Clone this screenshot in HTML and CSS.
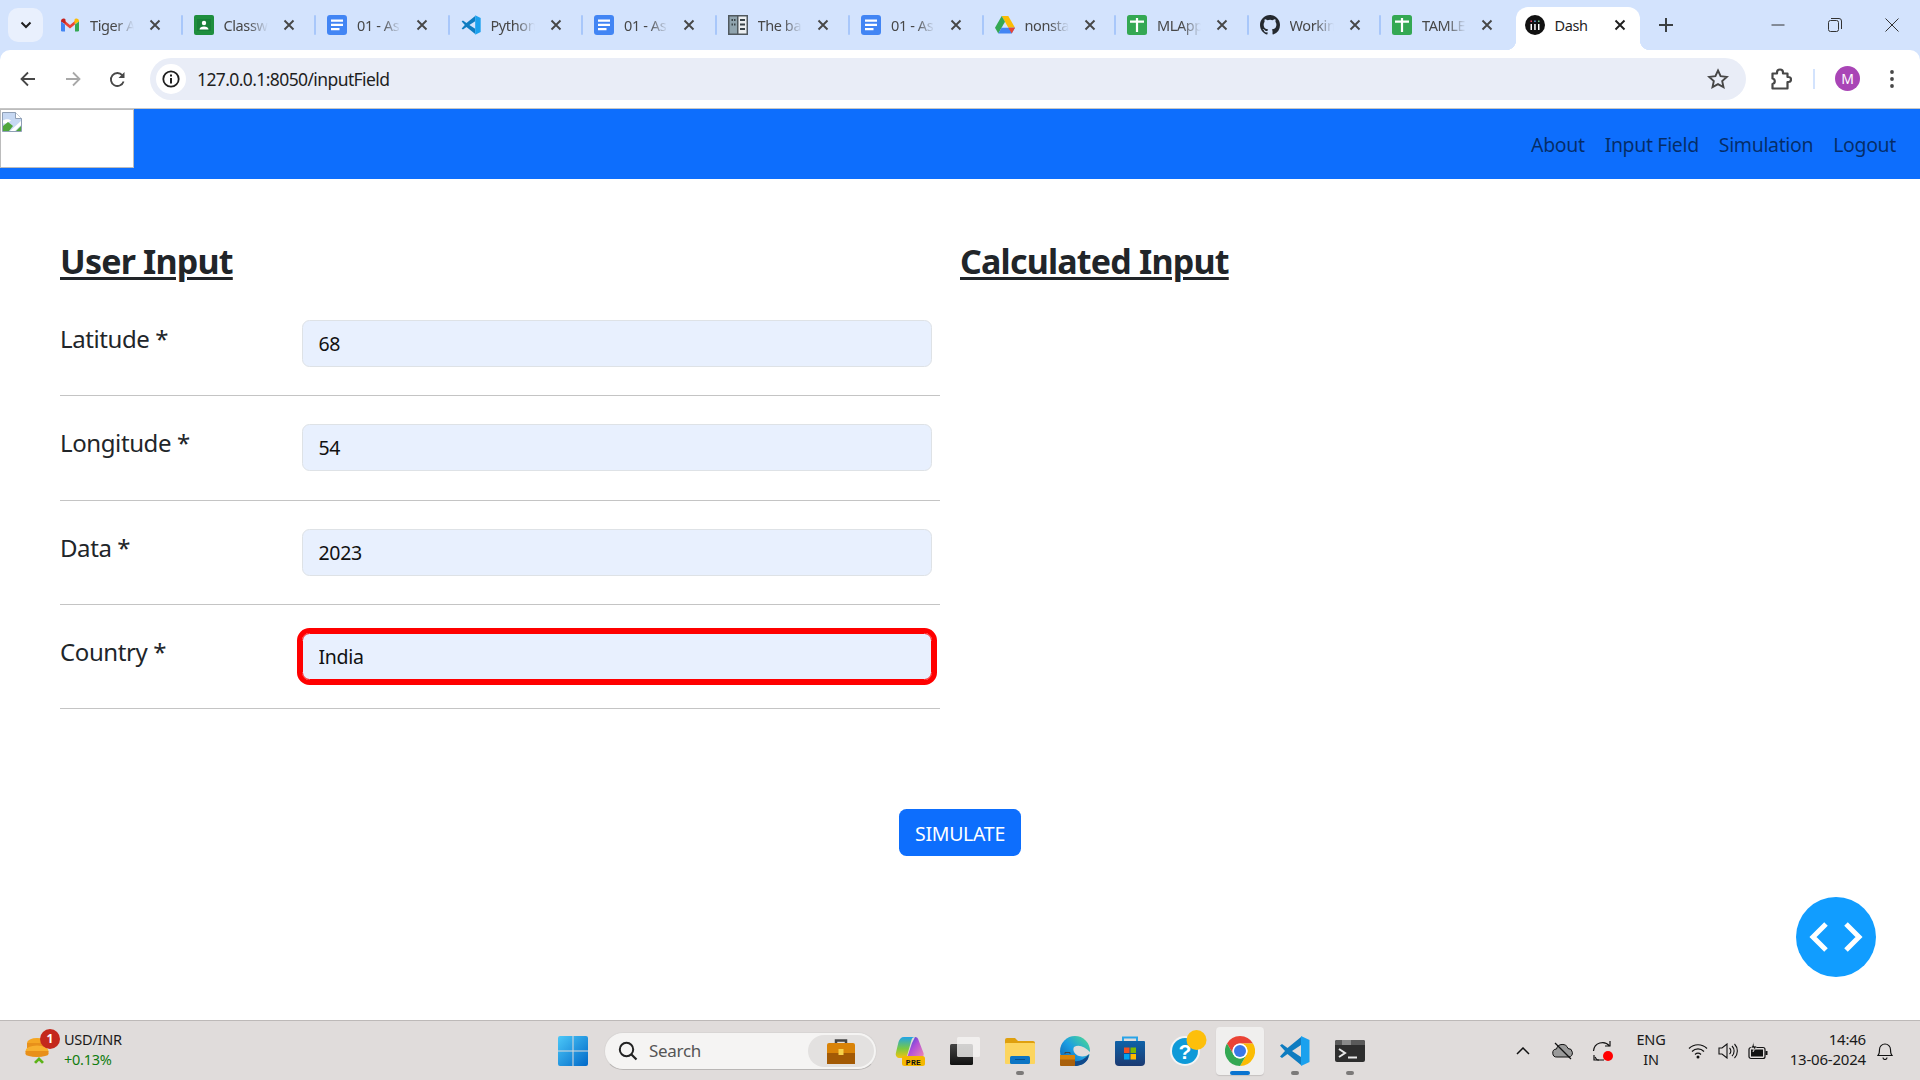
FILE: index.html
```html
<!DOCTYPE html>
<html lang="en">
<head>
<meta charset="utf-8">
<title>Dash</title>
<link rel="stylesheet" href="styles.css">
</head>
<body>
<svg class="defs" width="0" height="0" aria-hidden="true">
  <symbol id="i-gmail" viewBox="0 0 20 20">
    <path d="M4.500 5.500 10 10l5.500-4.500V9L10 13.500 4.500 9z" fill="#ea4335"/>
    <path d="M1 6.200C1 4 3.300 2.800 5 4l.5.400V9L1 6.800z" fill="#c5221f"/>
    <path d="M1 6.500 5 9.500V16.500H2.200A1.200 1.200 0 0 1 1 15.300z" fill="#4285f4"/>
    <path d="M19 6.200C19 4 16.700 2.800 15 4l-.5.400V9L19 6.800z" fill="#fbbc04"/>
    <path d="M19 6.500 15 9.500V16.500h2.800a1.200 1.200 0 0 0 1.200-1.200z" fill="#34a853"/>
  </symbol>
  <symbol id="i-class" viewBox="0 0 20 20">
    <rect width="20" height="20" rx="2" fill="#1e8e3e"/>
    <rect x="3" y="4" width="14" height="12" fill="#188038"/>
    <circle cx="10" cy="8" r="2.200" fill="#fff"/>
    <path d="M5.500 14.500c0-2 2-3 4.500-3s4.500 1 4.500 3z" fill="#fff"/>
  </symbol>
  <symbol id="i-docs" viewBox="0 0 20 20">
    <rect width="20" height="20" rx="3" fill="#4285f4"/>
    <path d="M4 4.500h12v2.200H4zM4 8.700h12v2.200H4zM4 13h8.500v2.200H4z" fill="#fff"/>
  </symbol>
  <symbol id="i-vscode" viewBox="0 0 31 30">
    <path d="M22 1 8.500 12 3 8 1 9.500 6 15 1 20.500 3 22 8.500 18 22 29V21L13 15 22 9z" fill="#0f7cc0"/>
    <path d="M22 0 30.500 4V26L22 30z" fill="#1ba1ee"/>
  </symbol>
  <symbol id="i-book" viewBox="0 0 20 20">
    <rect width="20" height="20" fill="#50595f"/>
    <rect x="1.500" y="1.500" width="7.500" height="17" fill="#90a4ae"/>
    <rect x="10.500" y="1.500" width="8" height="17" fill="#eceff1"/>
    <path d="M12 4h5v2h-5zM12 8.500h5v2h-5zM12 13h5v2h-5zM3.500 4h1.500v2H3.500zM6 4h1.500v2H6zM3.500 8.500h1.500v2H3.500zM6 8.500h1.500v2H6z" fill="#3a4449"/>
  </symbol>
  <symbol id="i-drive" viewBox="0 0 20 20">
    <path d="M6.700 1h6.600l6.700 11.700h-6.600z" fill="#fbbc04"/>
    <path d="M6.700 1 0 12.700l3.300 5.800L10 6.800z" fill="#34a853"/>
    <path d="M6.500 12.700H20l-3.300 5.800H3.300z" fill="#4285f4"/>
    <path d="M13.400 12.700H20l-3.300 5.800z" fill="#ea4335"/>
  </symbol>
  <symbol id="i-sheet" viewBox="0 0 20 20">
    <rect width="20" height="20" rx="2.500" fill="#34a853"/>
    <path d="M3 5.500h14v2.200H3zM8.900 3h2.200v14H8.900z" fill="#fff"/>
  </symbol>
  <symbol id="i-github" viewBox="0 0 16 16">
    <path fill="#24292f" d="M8 0C3.580 0 0 3.580 0 8c0 3.540 2.290 6.530 5.470 7.590.4.070.55-.17.55-.38v-1.340c-2.230.48-2.690-1.070-2.690-1.070-.36-.93-.89-1.170-.89-1.170-.73-.5.050-.49.050-.49.800.06 1.230.82 1.230.82.710 1.220 1.870.87 2.330.66.070-.52.280-.87.510-1.070-1.780-.2-3.640-.89-3.640-3.950 0-.87.310-1.590.82-2.150-.08-.2-.36-1.020.08-2.120 0 0 .67-.21 2.200.82a7.600 7.600 0 0 1 4 0c1.530-1.040 2.200-.82 2.200-.82.440 1.100.16 1.920.08 2.120.510.560.820 1.270.820 2.150 0 3.070-1.870 3.750-3.650 3.950.290.250.540.730.540 1.480v2.200c0 .210.150.460.550.380A8.010 8.010 0 0 0 16 8c0-4.420-3.580-8-8-8z"/>
  </symbol>
  <symbol id="i-dash" viewBox="0 0 20 20">
    <circle cx="10" cy="10" r="10" fill="#111"/>
    <path d="M5.500 9h1.500v6H5.500zM9.200 9h1.500v6H9.200zM13 9h1.500v6H13z" fill="#fff"/>
    <path d="M5.500 5.500h1.500v1.500H5.500z" fill="#e46"/><path d="M9.200 5.500h1.500v1.500H9.200z" fill="#6ae"/><path d="M13 5.500h1.500v1.500H13z" fill="#7c8"/>
  </symbol>
  <symbol id="i-x" viewBox="0 0 12 12">
    <path d="M1.500 1.500l9 9M10.500 1.500l-9 9" stroke="currentColor" stroke-width="1.900" fill="none"/>
  </symbol>
</svg>

<div class="shell">
  <div class="tabstrip">
    <div class="tab-search"><svg width="12" height="8" viewBox="0 0 12 8"><path d="M1.500 1.500 6 6l4.500-4.500" stroke="#1f1f1f" stroke-width="2" fill="none"/></svg></div>
    <div class="tabs">
      <div class="tab"><svg class="fav"><use href="#i-gmail"/></svg><span class="tab-title">Tiger A</span><svg class="tab-x"><use href="#i-x"/></svg></div>
      <div class="tab"><svg class="fav"><use href="#i-class"/></svg><span class="tab-title">Classw</span><svg class="tab-x"><use href="#i-x"/></svg></div>
      <div class="tab"><svg class="fav"><use href="#i-docs"/></svg><span class="tab-title">01 - As</span><svg class="tab-x"><use href="#i-x"/></svg></div>
      <div class="tab"><svg class="fav"><use href="#i-vscode"/></svg><span class="tab-title">Python</span><svg class="tab-x"><use href="#i-x"/></svg></div>
      <div class="tab"><svg class="fav"><use href="#i-docs"/></svg><span class="tab-title">01 - As</span><svg class="tab-x"><use href="#i-x"/></svg></div>
      <div class="tab"><svg class="fav"><use href="#i-book"/></svg><span class="tab-title">The ba</span><svg class="tab-x"><use href="#i-x"/></svg></div>
      <div class="tab"><svg class="fav"><use href="#i-docs"/></svg><span class="tab-title">01 - As</span><svg class="tab-x"><use href="#i-x"/></svg></div>
      <div class="tab"><svg class="fav"><use href="#i-drive"/></svg><span class="tab-title">nonsta</span><svg class="tab-x"><use href="#i-x"/></svg></div>
      <div class="tab"><svg class="fav"><use href="#i-sheet"/></svg><span class="tab-title">MLApp</span><svg class="tab-x"><use href="#i-x"/></svg></div>
      <div class="tab"><svg class="fav"><use href="#i-github"/></svg><span class="tab-title">Workin</span><svg class="tab-x"><use href="#i-x"/></svg></div>
      <div class="tab tab-last"><svg class="fav"><use href="#i-sheet"/></svg><span class="tab-title">TAMLE</span><svg class="tab-x"><use href="#i-x"/></svg></div>
      <div class="tab tab-active"><svg class="fav"><use href="#i-dash"/></svg><span class="tab-title">Dash</span><svg class="tab-x"><use href="#i-x"/></svg></div>
    </div>
    <svg class="tab-new" width="14" height="14" viewBox="0 0 14 14"><path d="M7 0v14M0 7h14" stroke="#3c4043" stroke-width="2"/></svg>
    <div class="win-controls">
      <span class="win-btn"><svg width="14" height="14" viewBox="0 0 14 14"><path d="M.5 7h13" stroke="#333" stroke-width="1"/></svg></span>
      <span class="win-btn"><svg width="14" height="14" viewBox="0 0 14 14"><rect x=".5" y="2.500" width="10" height="11" rx="2" fill="none" stroke="#333"/><path d="M3 .5h8a2.500 2.500 0 0 1 2.500 2.500v8" fill="none" stroke="#333"/></svg></span>
      <span class="win-btn"><svg width="14" height="14" viewBox="0 0 14 14"><path d="M.5.5l13 13M13.500.5l-13 13" stroke="#333" stroke-width="1"/></svg></span>
    </div>
  </div>

  <div class="toolbar">
    <div class="nav-btns">
      <span class="nav-btn"><svg width="16" height="16" viewBox="0 0 16 16"><path d="M15 8H2M8 1.500 1.500 8 8 14.500" stroke="#474747" stroke-width="1.800" fill="none"/></svg></span>
      <span class="nav-btn"><svg width="16" height="16" viewBox="0 0 16 16"><path d="M1 8h13M8 1.500 14.500 8 8 14.500" stroke="#a8a8a8" stroke-width="1.800" fill="none"/></svg></span>
      <span class="nav-btn"><svg width="17" height="17" viewBox="0 0 17 17"><path d="M14.600 10.500a6.500 6.500 0 1 1-1.200-6.200" stroke="#474747" stroke-width="1.800" fill="none"/><path d="M15.500 1v6h-6z" fill="#474747"/></svg></span>
    </div>
    <div class="omnibox">
      <span class="site-info"><svg width="18" height="18" viewBox="0 0 18 18"><circle cx="9" cy="9" r="7.700" fill="none" stroke="#1f1f1f" stroke-width="1.800"/><path d="M8 8h2v5.500H8zM8 4.500h2v2H8z" fill="#1f1f1f"/></svg></span>
      <span class="url">127.0.0.1:8050/inputField</span>
      <svg class="star" width="22" height="22" viewBox="0 0 22 22"><path d="m11 2.500 2.600 5.700 6.200.7-4.600 4.200 1.300 6.100-5.500-3.100-5.500 3.100 1.300-6.100-4.600-4.200 6.200-.7z" fill="none" stroke="#474747" stroke-width="1.900"/></svg>
    </div>
    <div class="tool-right">
      <svg class="ext" width="22" height="22" viewBox="0 0 22 22"><path d="M2.500 5.500H7V4.500a3 3 0 0 1 6 0v1h4.500V9h1a2.500 2.500 0 0 1 0 5h-1v6.500h-15V16a2.800 2.800 0 0 0 0-5.500z" fill="none" stroke="#474747" stroke-width="2.200" stroke-linejoin="round"/></svg>
      <span class="tool-sep"></span>
      <span class="avatar">M</span>
      <svg class="menu" width="6" height="20" viewBox="0 0 6 20"><circle cx="3" cy="3" r="1.900" fill="#474747"/><circle cx="3" cy="10" r="1.900" fill="#474747"/><circle cx="3" cy="17" r="1.900" fill="#474747"/></svg>
    </div>
  </div>
</div>

<main class="page">
  <header class="navbar">
    <div class="logo"><svg width="20" height="20" viewBox="0 0 20 20"><path d="M.5.500h13l6 6v13H.500z" fill="#c6d8f3" stroke="#8f9fb5"/><path d="M13.500.500v6h6" fill="#fff" stroke="#8f9fb5"/><path d="M1 8.500c3-2 6-1.500 8 0l-4 3H1z" fill="#fff"/><path d="M1 19v-5l5-4 5 4-4 5z" fill="#4fa63c"/><path d="M8 19l11-10v4l-6 6z" fill="#fff"/><path d="M14 19l5-5v5z" fill="#4fa63c"/></svg></div>
    <nav class="nav-bar">
      <a class="nav-link">About</a>
      <a class="nav-link">Input Field</a>
      <a class="nav-link">Simulation</a>
      <a class="nav-link">Logout</a>
    </nav>
  </header>

  <section class="content">
    <div class="col-left">
      <h2 class="title">User Input</h2>
      <div class="row"><label class="field-label">Latitude *</label><input class="field" value="68"></div>
      <div class="row"><label class="field-label">Longitude *</label><input class="field" value="54"></div>
      <div class="row"><label class="field-label">Data *</label><input class="field" value="2023"></div>
      <div class="row"><label class="field-label">Country *</label><input class="field field-error" value="India"></div>
    </div>
    <div class="col-right">
      <h2 class="title">Calculated Input</h2>
    </div>
  </section>

  <div class="actions"><button class="simulate">SIMULATE</button></div>

  <button class="fab" aria-label="Debug"><svg width="54" height="32" viewBox="0 0 54 32"><path d="M17 3 4 16l13 13M37 3l13 13-13 13" fill="none" stroke="#fff" stroke-width="5"/></svg></button>
</main>

<footer class="taskbar">
  <div class="widget">
    <div class="coins">
      <svg width="26" height="38" viewBox="0 0 26 38"><ellipse cx="12" cy="12" rx="10" ry="5" fill="#f5a623"/><rect x="2" y="12" width="20" height="5" fill="#e8901a"/><ellipse cx="12" cy="20" rx="11.500" ry="5.500" fill="#f8b02e"/><rect x="0.500" y="20" width="23" height="3" fill="#e8901a"/><ellipse cx="12" cy="23" rx="11.500" ry="3" fill="#e8901a"/><path d="M9 31l5-5 5 5-2 1.800-3-3-3 3z" fill="#5cb318"/></svg>
      <span class="badge">1</span>
    </div>
    <div class="widget-text"><span class="ticker">USD/INR</span><span class="change">+0.13%</span></div>
  </div>
  <div class="task-center">
    <svg class="start" width="30" height="30" viewBox="0 0 30 30"><defs><linearGradient id="w" x1="0" y1="0" x2="1" y2="1"><stop offset="0" stop-color="#4cc8f8"/><stop offset="1" stop-color="#0068c8"/></linearGradient></defs><path d="M0 2a2 2 0 0 1 2-2h12.500v14.500H0zM15.500 0H28a2 2 0 0 1 2 2v12.500H15.500zM0 15.500h14.500V30H2a2 2 0 0 1-2-2zM15.500 15.500H30V28a2 2 0 0 1-2 2H15.500z" fill="url(#w)"/></svg>
    <div class="search">
      <svg width="20" height="20" viewBox="0 0 20 20"><circle cx="8.500" cy="8.500" r="6.700" fill="none" stroke="#222" stroke-width="2"/><path d="m13.500 13.500 5 5" stroke="#222" stroke-width="2.200"/></svg>
      <span class="search-text">Search</span>
      <span class="search-badge"><svg width="30" height="26" viewBox="0 0 30 26"><path d="M10 6V2.500h10V6" fill="none" stroke="#444" stroke-width="2.500"/><rect x="1" y="5" width="28" height="21" rx="2" fill="#d98308"/><rect x="1" y="15" width="28" height="11" fill="#a35a05"/><rect x="12.500" y="11" width="5" height="6" fill="#f7d14a"/></svg></span>
    </div>
    <div class="task-icons">
      <span class="task-icon"><svg width="30" height="30" viewBox="0 0 30 30"><defs><linearGradient id="cpa" x1="0" y1="0" x2="0" y2="1"><stop offset="0" stop-color="#1fa4e8"/><stop offset=".55" stop-color="#7ac943"/><stop offset="1" stop-color="#f4c20d"/></linearGradient><linearGradient id="cpb" x1="0" y1="0" x2="1" y2="1"><stop offset="0" stop-color="#1c50d8"/><stop offset=".45" stop-color="#b04fd8"/><stop offset="1" stop-color="#f28ab0"/></linearGradient></defs><path d="M20 1c2 0 3 1 3.500 3L28.500 17c.7 2.500-.5 5-3.500 5H12l5-15z" fill="url(#cpb)"/><path d="M9 1h11c-2 0-3 1-3.500 3L12 20c-.5 1.300-2 2-3 2H5c-3 0-5-2-4-5.500L3.500 6C4.500 3 6 1 9 1z" fill="url(#cpa)"/><rect x="7" y="20" width="23" height="10" rx="2.500" fill="#f5b800"/><text class="pre" x="18.500" y="28.500" text-anchor="middle">PRE</text></svg></span>
      <span class="task-icon"><svg width="30" height="28" viewBox="0 0 30 28"><defs><linearGradient id="tv" x1="0" y1="0" x2="0" y2="1"><stop offset="0" stop-color="#444"/><stop offset="1" stop-color="#111"/></linearGradient></defs><rect x="0" y="7" width="23" height="21" rx="1.500" fill="url(#tv)"/><rect x="7" y="0" width="23" height="20" rx="1.500" fill="#f5f4f3" fill-opacity=".8"/></svg></span>
      <span class="task-icon is-open"><svg width="30" height="26" viewBox="0 0 30 26"><path d="M0 2a2 2 0 0 1 2-2h8l3 3h15a2 2 0 0 1 2 2v3H0z" fill="#dfa00e"/><rect y="5" width="30" height="21" rx="1" fill="#fcd55f"/><rect x="5" y="18" width="20" height="8" rx="1.500" fill="#0b74c4"/><path d="M10 21.500h10" stroke="#064f8c"/></svg></span>
      <span class="task-icon"><svg width="30" height="30" viewBox="0 0 30 30"><defs><linearGradient id="edge" x1="0" y1="1" x2="1" y2="0"><stop offset="0" stop-color="#0c59a4"/><stop offset=".5" stop-color="#1b9de2"/><stop offset="1" stop-color="#52e08a"/></linearGradient></defs><circle cx="15" cy="15" r="15" fill="url(#edge)"/><path d="M14 11c5-3 11 0 16 5v2c-3 2-7 3-11 2-4-1-7-6-5-9z" fill="#e0dcdb"/><path d="M14 25c5 1 10-1 15-7l-1 5c-3 5-8 7-13 7z" fill="#114a8b"/><rect y="19" width="15" height="11" rx="1" fill="#a9600c"/><rect y="19" width="15" height="4.500" fill="#d98308"/><path d="M5 18v-1.500h5V18" fill="none" stroke="#444"/></svg></span>
      <span class="task-icon"><svg width="30" height="30" viewBox="0 0 30 30"><defs><linearGradient id="bag" x1="0" y1="0" x2="0" y2="1"><stop offset="0" stop-color="#0f62a8"/><stop offset="1" stop-color="#1b3a72"/></linearGradient></defs><path d="M8 7V1.500h14V7" fill="none" stroke="#2aa4e8" stroke-width="2"/><path d="M1 5h28a1 1 0 0 1 1 1v20a4 4 0 0 1-4 4H4a4 4 0 0 1-4-4V6a1 1 0 0 1 1-1z" fill="url(#bag)"/><rect x="9" y="11.500" width="5.500" height="5.500" fill="#f25022"/><rect x="15.500" y="11.500" width="5.500" height="5.500" fill="#7fba00"/><rect x="9" y="18" width="5.500" height="5.500" fill="#00a4ef"/><rect x="15.500" y="18" width="5.500" height="5.500" fill="#ffb900"/></svg></span>
      <span class="task-icon"><svg class="over" width="30" height="30" viewBox="0 0 30 30"><circle cx="15" cy="15" r="15" fill="#f4f4f4"/><circle cx="15" cy="15" r="13" fill="#0f9ad8"/><text class="qmark" x="15" y="23" text-anchor="middle">?</text><circle cx="26.500" cy="4" r="10" fill="#fdbf0b"/></svg></span>
      <span class="task-icon is-active"><svg width="30" height="30" viewBox="0 0 30 30"><path d="M15 0a15 15 0 0 1 13 7.500H15a7.500 7.500 0 0 0-6.500 11.250L2 7.500A15 15 0 0 1 15 0z" fill="#ea4335"/><path d="M28 7.500A15 15 0 0 1 15 30l6.500-11.250A7.500 7.500 0 0 0 15 7.500z" fill="#fbbc04"/><path d="M2 7.500 8.500 18.750A7.500 7.500 0 0 0 21.500 18.750L15 30A15 15 0 0 1 2 7.500z" fill="#34a853"/><circle cx="15" cy="15" r="7.500" fill="#fff"/><circle cx="15" cy="15" r="6" fill="#3b78e7"/></svg></span>
      <span class="task-icon is-open"><svg width="31" height="30"><use href="#i-vscode"/></svg></span>
      <span class="task-icon is-open"><svg width="30" height="22" viewBox="0 0 30 22"><rect width="30" height="22" rx="2" fill="#2e2e2e"/><path d="M2 0h26a2 2 0 0 1 2 2v3H0V2a2 2 0 0 1 2-2z" fill="#5a5a5a"/><rect x="7" width="9" height="5" fill="#8a8a8a"/><path d="m4 9 6 4-6 4" fill="none" stroke="#e8e8e8" stroke-width="2"/><path d="M13 17.500h9" stroke="#e8e8e8" stroke-width="2"/></svg></span>
    </div>
  </div>
  <div class="tray">
    <svg class="tray-chev" width="14" height="8" viewBox="0 0 14 8"><path d="M1 7l6-6 6 6" fill="none" stroke="#111" stroke-width="1.500"/></svg>
    <svg class="tray-cloud" width="22" height="18" viewBox="0 0 22 18"><path d="M5 15a4 4 0 0 1-.5-8A6 6 0 0 1 16 6.500a4.300 4.300 0 0 1 1 8.500z" fill="#9a9a9a" stroke="#111"/><path d="M3 1l16 16" stroke="#111" stroke-width="1.300"/></svg>
    <svg class="tray-sync" width="22" height="22" viewBox="0 0 22 22"><path d="M1.500 11a9 9 0 0 1 16-5M3 17c1 2 2 3 3 3h6" fill="none" stroke="#111" stroke-width="1.200"/><path d="M13 6h5V1M2 15v5h5" fill="none" stroke="#111" stroke-width="1.200"/><circle cx="16" cy="16" r="5" fill="#f00"/></svg>
    <div class="lang"><span>ENG</span><span>IN</span></div>
    <svg class="tray-wifi" width="20" height="16" viewBox="0 0 20 16"><path d="M1 5.500c5-5 13-5 18 0M4 8.500c3.500-3.500 8.500-3.500 12 0M7 11.500c2-1.700 4-1.700 6 0" fill="none" stroke="#111" stroke-width="1.200"/><circle cx="10" cy="14" r="1.500" fill="#111"/></svg>
    <svg class="tray-vol" width="20" height="16" viewBox="0 0 20 16"><path d="M1 5h3l5-4v14l-5-4H1z" fill="none" stroke="#111" stroke-width="1.100"/><path d="M11.500 5a4 4 0 0 1 0 6M14 3a7 7 0 0 1 0 10M16.500 1a10 10 0 0 1 0 14" fill="none" stroke="#111" stroke-width="1.100"/></svg>
    <svg class="tray-batt" width="20" height="18" viewBox="0 0 20 18"><rect x="1" y="5.500" width="16" height="11" rx="2" fill="none" stroke="#111" stroke-width="1.200"/><rect x="3" y="7.500" width="12" height="7" fill="#111"/><rect x="17.500" y="9" width="2" height="4" fill="#111"/><path d="M6 0 3 6h3l-1 4 4-6H6z" fill="#111" stroke="#e0dcdb" stroke-width=".7"/></svg>
    <div class="clock"><span>14:46</span><span>13-06-2024</span></div>
    <svg class="tray-bell" width="16" height="18" viewBox="0 0 16 18"><path d="M1 13.500c1.500-1.500 1.500-3 1.500-6a5.500 5.500 0 0 1 11 0c0 3 0 4.500 1.500 6z" fill="none" stroke="#111" stroke-width="1.100"/><path d="M6 15.500a2 2 0 0 0 4 0" fill="none" stroke="#111" stroke-width="1.100"/></svg>
  </div>
</footer>
</body>
</html>
```
FILE: styles.css
```css
* { box-sizing: border-box; }
html, body { margin: 0; padding: 0; }
body {
  width: 1920px;
  height: 1080px;
  overflow: hidden;
  display: flex;
  flex-direction: column;
  background: #fff;
  color: #212529;
  font-family: "Noto Sans", "Open Sans", sans-serif;
}
.defs { position: absolute; }

/* Browser chrome */
.shell { background: #d3e3fd; flex: none; }
.tabstrip { height: 50px; display: flex; align-items: flex-end; }
.tab-search {
  width: 35px; height: 34px; margin: 0 8px 8px 8px;
  border-radius: 10px; background: #e9f0fd;
  display: flex; align-items: center; justify-content: center;
}
.tabs { display: flex; }
.tab {
  flex: none; width: 133.500px; height: 43px; padding: 0 2px 7px 9px;
  display: flex; align-items: center; color: #474747;
}
.tab:nth-child(n+8) { width: 132.500px; }
.tab::after {
  content: ""; width: 2px; height: 20px; background: #a8c7fa;
  margin-left: auto; border-radius: 1px;
}
.fav { width: 20px; height: 20px; flex: none; }
.tab-title {
  width: 45px; margin: 0 14px 0 10px; white-space: nowrap;
  font-size: 14.500px; letter-spacing: -.4px;
  -webkit-mask-image: linear-gradient(to right, #000 55%, transparent 98%);
  mask-image: linear-gradient(to right, #000 55%, transparent 98%);
}
.tab-x { width: 12px; height: 12px; flex: none; color: #474747; }
.tab-last::after { display: none; }
.tab.tab-active {
  width: 124px; background: #fff; border-radius: 12px 12px 0 0;
  color: #1f1f1f; position: relative;
}
.tab-active::after, .tab-active::before {
  content: ""; position: absolute; bottom: 0; width: 10px; height: 10px; margin: 0; border-radius: 0;
}
.tab-active::before { left: -10px; background: radial-gradient(circle at 0 0, transparent 10px, #fff 10.500px); }
.tab-active::after { right: -10px; background: radial-gradient(circle at 100% 0, transparent 10px, #fff 10.500px); }
.tab-active .tab-title { -webkit-mask-image: none; mask-image: none; color: #1f1f1f; }
.tab-active .tab-x { color: #1f1f1f; }
.tab-new { margin: 0 0 18px 19px; flex: none; }
.win-controls { margin-left: auto; display: flex; margin-bottom: 18px; }
.win-btn { width: 57px; display: flex; justify-content: center; }

.toolbar {
  height: 59px; background: #fff; border-bottom: 1px solid #c6c6c6;
  border-radius: 10px 10px 0 0;
  display: flex; align-items: center; padding: 0 0 0 5px;
}
.nav-btns { display: flex; flex: none; }
.nav-btn { width: 45px; display: flex; justify-content: center; }
.omnibox {
  margin-left: 10px; flex: 1; height: 42px; border-radius: 21px;
  background: #e9edf7; display: flex; align-items: center; padding: 0 17px 0 6px;
}
.site-info {
  width: 30px; height: 30px; border-radius: 50%; background: #fff;
  display: flex; align-items: center; justify-content: center;
}
.url { margin-left: 11px; font-size: 17.500px; letter-spacing: -.6px; color: #1f1f1f; }
.star { margin-left: auto; }
.tool-right { width: 174px; flex: none; display: flex; align-items: center; }
.ext { margin-left: 24px; }
.tool-sep { width: 2px; height: 20px; margin-left: 21px; background: #d3e3fd; }
.avatar {
  width: 25px; height: 25px; margin: -2px 0 0 20px; border-radius: 50%;
  background: #a945b6; color: #fff; font-size: 14px;
  display: flex; align-items: center; justify-content: center;
}
.menu { margin-left: 29px; }

/* Page */
.page { flex: 1; position: relative; min-height: 0; }
.navbar { height: 70px; display: flex; background: #0d6efd; }
.logo {
  width: 134px; height: 59px; background: #fff; border: 1px solid #bcbcbc;
  padding: 2px 1px; flex: none;
}
.logo svg { display: block; }
.nav-bar {
  margin-left: auto; display: flex; gap: 20px; align-items: center; padding: 0 24px 0 0;
  height: 70px;
}
.nav-link { font-size: 19.500px; letter-spacing: -.35px; color: rgba(0, 0, 0, .6); }

.content { display: flex; padding: 0 0 0 60px; gap: 20px; margin-top: 58px; }
.col-left { width: 880px; flex: none; }
.title {
  margin: 0 0 35px; font-size: 34px; line-height: 48px; font-weight: 700;
  letter-spacing: -.8px; text-decoration: underline; text-decoration-thickness: 3px;
  text-underline-offset: 3px; color: #212529;
}
.row {
  display: flex; align-items: flex-start;
  padding: 0 8px 28.330px 0; margin-bottom: 28px;
  border-bottom: 1px solid #c4c4c4;
}
.field-label {
  width: 242px; flex: none; font-size: 24px; line-height: 37px; letter-spacing: -.4px; color: #212529;
}
.field {
  flex: 1; height: 47px; padding: 0 15.500px; border: 1px solid #dee2e6; border-radius: 7.500px;
  background: #e8f0fe; font: inherit; font-size: 19.500px; letter-spacing: -.3px; color: #111; outline: none;
}
.field-error { border-color: #f00; outline: 5px solid #f00; }

.actions { display: flex; justify-content: center; margin-top: 72px; }
.simulate {
  width: 122px; height: 47px; padding: 1px 0 0; border: 0; border-radius: 7.500px; background: #0d6efd;
  color: #fff; font: inherit; font-size: 19.500px; letter-spacing: -.3px;
}
.fab {
  position: absolute; right: 44px; bottom: 43px; width: 80px; height: 80px;
  border: 0; padding: 0; border-radius: 50%; background: #119dff;
  display: flex; align-items: center; justify-content: center;
}

/* Taskbar */
.taskbar {
  height: 60px; flex: none; background: #e0dcdb; border-top: 1px solid #bdb9b8;
  display: flex; align-items: center;
}
.widget { width: 558px; flex: none; display: flex; align-items: center; padding-left: 25px; }
.coins { width: 39px; height: 40px; position: relative; flex: none; }
.badge {
  position: absolute; left: 15px; top: -2px; width: 20px; height: 20px; border-radius: 50%;
  background: #c4281c; color: #fff; font-size: 12px; font-weight: 700;
  display: flex; align-items: center; justify-content: center;
}
.widget-text { display: flex; flex-direction: column; margin-top: -3px; font-size: 14.500px; letter-spacing: -.25px; line-height: 20px; }
.ticker { color: #1a1a1a; }
.change { color: #107c10; }
.task-center { display: flex; align-items: center; flex: none; }
.start { flex: none; }
.search {
  margin-left: 16px; width: 273px; height: 38px; border-radius: 19px; background: #f5f4f3;
  border: 1px solid #d8d5d4; border-bottom-color: #b9b6b5;
  display: flex; align-items: center; padding: 0 2px 0 13px;
}
.search-text { margin-left: 11px; font-size: 17px; letter-spacing: -.3px; color: #555; }
.search-badge {
  margin-left: auto; width: 66px; height: 32px; border-radius: 16px; background: #e3e1e0;
  display: flex; align-items: center; justify-content: center;
}
.task-icons { display: flex; margin-left: 5px; }
.task-icon {
  width: 55px; height: 48px; position: relative;
  display: flex; align-items: center; justify-content: center;
}
.task-icon.is-open::after, .task-icon.is-active::after {
  content: ""; position: absolute; bottom: 0; left: 50%; width: 8px; height: 4px; margin-left: -4px;
  border-radius: 2px; background: #7c7a79;
}
.task-icon.is-active { width: 48px; margin: 0 3.500px; background: #f0efee; border-radius: 4px; box-shadow: 0 1px 1px rgba(0,0,0,.12); }
.task-icon.is-active::after { width: 20px; margin-left: -10px; background: #0b74d0; }
.over { overflow: visible; }
.pre { font: 700 8px "Liberation Mono", monospace; fill: #111; letter-spacing: .4px; }
.qmark { font: 700 21px "Liberation Sans", sans-serif; fill: #fff; }
.tray { margin-left: auto; padding-right: 27px; display: flex; align-items: center; }
.tray-cloud { margin-left: 22px; }
.tray-sync { margin-left: 18px; }
.lang {
  margin: -3px 0 0 16px; width: 42px; display: flex; flex-direction: column; align-items: center;
  font-size: 14.500px; line-height: 20px; letter-spacing: -.2px; color: #1a1a1a;
}
.tray-wifi { margin-left: 16px; }
.tray-vol { margin-left: 10px; }
.tray-batt { margin-left: 10px; }
.clock {
  margin: -3px 0 0 8px; width: 90px; display: flex; flex-direction: column; align-items: flex-end;
  font-size: 15px; line-height: 20px; letter-spacing: -.2px; color: #1a1a1a;
  white-space: nowrap;
}
.tray-bell { margin-left: 11px; }
```
